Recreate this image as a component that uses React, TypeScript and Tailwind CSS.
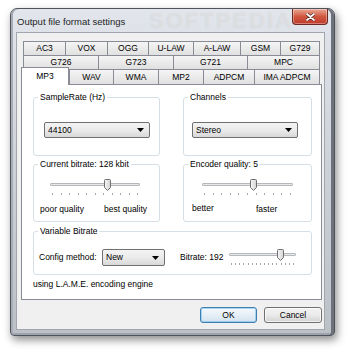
import React from "react";

const row1 = [
  { label: "AC3", w: "w-[42px]" },
  { label: "VOX", w: "w-[42px]" },
  { label: "OGG", w: "w-[41px]" },
  { label: "U-LAW", w: "w-[45px]" },
  { label: "A-LAW", w: "w-[47px]" },
  { label: "GSM", w: "w-[40px]" },
  { label: "G729", w: "flex-1" },
];

const row2 = [
  { label: "G726", w: "w-[75px]" },
  { label: "G723", w: "w-[75px]" },
  { label: "G721", w: "w-[74px]" },
  { label: "MPC", w: "flex-1" },
];

const row3 = [
  { label: "WAV", w: "w-[44px]" },
  { label: "WMA", w: "w-[45px]" },
  { label: "MP2", w: "w-[45px]" },
  { label: "ADPCM", w: "w-[51px]" },
  { label: "IMA ADPCM", w: "flex-1" },
];

function Tab({ label, w, last }: { label: string; w: string; last?: boolean }) {
  return (
    <div
      className={`h-full flex items-center justify-center border-l border-t border-[#898c95] bg-gradient-to-b from-[#f5f5f5] to-[#e0e0e0] ${w} ${last ? "border-r" : ""}`}
    >
      {label}
    </div>
  );
}

function Combo({ value, w }: { value: string; w: string }) {
  return (
    <div
      className={`flex items-center justify-between h-[16px] border border-[#707070] rounded-[2px] bg-gradient-to-b from-[#f3f3f3] via-[#ebebeb] to-[#d8d8d8] pl-[3px] pr-[5px] ${w}`}
    >
      <span>{value}</span>
      <svg width="7" height="4" viewBox="0 0 7 4">
        <path d="M0 0H7L3.5 4Z" fill="#000" />
      </svg>
    </div>
  );
}

function Slider({ w, thumb, ticks }: { w: string; thumb: string; ticks: number }) {
  return (
    <div className={`relative h-[17px] ${w}`}>
      <div className="absolute left-0 right-0 top-[4px] h-[3px] border border-[#b4b7bc] bg-[#e8e8e8] rounded-[1px]" />
      <svg className={`absolute top-0 ${thumb}`} width="7" height="12" viewBox="0 0 7 12">
        <defs>
          <linearGradient id="th" x1="0" y1="0" x2="1" y2="0">
            <stop offset="0" stopColor="#f6f6f6" />
            <stop offset="1" stopColor="#d4d4d4" />
          </linearGradient>
        </defs>
        <path d="M0.5 1.5Q0.5 0.5 1.5 0.5H5.5Q6.5 0.5 6.5 1.5V8.5L3.5 11.5L0.5 8.5Z" fill="url(#th)" stroke="#6f6f6f" />
      </svg>
      <div className="absolute left-[2px] right-[2px] top-[14px] flex justify-between">
        {Array.from({ length: ticks }).map((_, i) => (
          <div key={i} className="w-px h-[2px] bg-[#a5a5a5]" />
        ))}
      </div>
    </div>
  );
}

export default function App() {
  return (
    <div className="w-[350px] h-[352px] bg-white pt-[8px] pl-[10px] font-['Liberation_Sans',Arial,sans-serif] text-[8.5px] text-black overflow-hidden">
      <div className="relative w-[325px] h-[328px] flex flex-col rounded-t-[7px] rounded-b-[4px] border border-[#4f545c] bg-gradient-to-b from-[#e2e6ec] via-[#ccd0d7] to-[#bcc0c7] shadow-[inset_-3px_0_0_#6d717a,inset_2px_0_0_#a9adb5,inset_0_-2px_0_#9ea2aa,2px_4px_8px_rgba(0,0,0,0.45)]">
        {/* title bar */}
        <div className="relative h-[23px] flex justify-between pl-[6px] pr-[6px]">
          <span className="pt-[7px] text-[9.5px] leading-[12px] text-[#1e1e1e]">Output file format settings</span>
          <span className="absolute left-[138px] top-[1px] text-[22px] leading-[22px] font-bold tracking-[2px] text-white/40 [text-shadow:0_0_1px_rgba(0,0,0,0.12)]">
            SOFTPEDIA
          </span>
          <div className="relative w-[36px] h-[16px] flex items-center justify-center rounded-b-[4px] border border-t-0 border-[#6b2a21] bg-gradient-to-b from-[#e9a896] via-[#d0573f] to-[#c0392b] shadow-[inset_0_0_0_1px_rgba(255,255,255,0.35)]">
            <svg width="9" height="8" viewBox="0 0 9 8">
              <path d="M1 1L8 7M8 1L1 7" stroke="#4a1a14" strokeWidth="3" strokeLinecap="round" />
              <path d="M1 1L8 7M8 1L1 7" stroke="#fff" strokeWidth="1.8" strokeLinecap="round" />
            </svg>
          </div>
        </div>

        {/* body */}
        <div className="flex-1 pl-[5px] pr-[9px] pb-[5px] flex">
          <div className="flex-1 border border-[#a2a7af] bg-[#f0f0f0] pl-[4px] pr-[2px] pt-[8px] flex flex-col">
            {/* tab rows */}
            <div className="flex flex-col">
              <div className="flex h-[14px] ml-[2px] w-[297px]">
                {row1.map((t, i) => (
                  <Tab key={t.label} label={t.label} w={t.w} last={i === row1.length - 1} />
                ))}
              </div>
              <div className="flex h-[14px] ml-[2px] w-[297px]">
                {row2.map((t, i) => (
                  <Tab key={t.label} label={t.label} w={t.w} last={i === row2.length - 1} />
                ))}
              </div>
              <div className="flex h-[15px] w-[299px] items-start">
                <div className="relative z-10 -mt-[2px] w-[48px] h-[18px] flex items-start justify-center pt-[2px] border-l border-t border-r border-[#898c95] bg-white">
                  MP3
                </div>
                {row3.map((t, i) => (
                  <Tab key={t.label} label={t.label} w={t.w} last={i === row3.length - 1} />
                ))}
              </div>
            </div>

            {/* tab panel */}
            <div className="w-[301px] h-[216px] border border-[#898c95] bg-white pt-[7px] pl-[11px] pr-[9px] flex flex-col">
              <div className="grid grid-cols-[127px_129px] gap-x-[23px]">
                <fieldset className="h-[64px] min-w-0 border border-[#d5dfe5] rounded-[3px]">
                  <legend className="ml-[4px] px-[2px] leading-[11px]">SampleRate (Hz)</legend>
                  <div className="mt-[19px] ml-[10px]">
                    <Combo value="44100" w="w-[106px]" />
                  </div>
                </fieldset>
                <fieldset className="h-[64px] min-w-0 border border-[#d5dfe5] rounded-[3px]">
                  <legend className="ml-[4px] px-[2px] leading-[11px]">Channels</legend>
                  <div className="mt-[19px] ml-[8px]">
                    <Combo value="Stereo" w="w-[106px]" />
                  </div>
                </fieldset>

                <fieldset className="mt-[3px] h-[63px] min-w-0 border border-[#d5dfe5] rounded-[3px]">
                  <legend className="ml-[4px] px-[2px] leading-[11px]">Current bitrate: 128 kbit</legend>
                  <div className="mt-[9px] ml-[16px]">
                    <Slider w="w-[90px]" thumb="left-[54px]" ticks={11} />
                  </div>
                  <div className="mt-[8px] ml-[6px] flex leading-[11px]">
                    <span className="w-[64px]">poor quality</span>
                    <span>best quality</span>
                  </div>
                </fieldset>
                <fieldset className="mt-[3px] h-[63px] min-w-0 border border-[#d5dfe5] rounded-[3px]">
                  <legend className="ml-[4px] px-[2px] leading-[11px]">Encoder quality: 5</legend>
                  <div className="mt-[9px] ml-[18px]">
                    <Slider w="w-[91px]" thumb="left-[48px]" ticks={11} />
                  </div>
                  <div className="mt-[7px] ml-[8px] flex leading-[11px]">
                    <span className="w-[64px]">better</span>
                    <span className="mt-[1px]">faster</span>
                  </div>
                </fieldset>
              </div>

              <fieldset className="mt-[4px] h-[49px] w-[279px] min-w-0 border border-[#d5dfe5] rounded-[3px]">
                <legend className="ml-[4px] px-[2px] leading-[11px]">Variable Bitrate</legend>
                <div className="mt-[12px] ml-[5px] h-[17px] flex items-center">
                  <span className="w-[63px]">Config method:</span>
                  <Combo value="New" w="w-[63px] h-[17px]" />
                  <span className="ml-[15px] w-[49px]">Bitrate: 192</span>
                  <Slider w="w-[67px]" thumb="left-[48px]" ticks={16} />
                </div>
              </fieldset>

              <div className="mt-[4px] leading-[11px]">using L.A.M.E. encoding engine</div>
            </div>

            {/* buttons */}
            <div className="mt-[7px] flex justify-end gap-[7px]">
              <button className="w-[57px] h-[16px] flex items-center justify-center rounded-[3px] border border-[#3c7fb1] bg-gradient-to-b from-[#f4f9fd] via-[#e6eff7] to-[#d3e2ee] shadow-[inset_0_0_0_1px_rgba(120,190,235,0.6)]">
                OK
              </button>
              <button className="w-[58px] h-[16px] flex items-center justify-center rounded-[3px] border border-[#707070] bg-gradient-to-b from-[#f2f2f2] via-[#ebebeb] to-[#d2d2d2] shadow-[inset_0_0_0_1px_rgba(255,255,255,0.7)]">
                Cancel
              </button>
            </div>
          </div>
        </div>
      </div>
    </div>
  );
}
